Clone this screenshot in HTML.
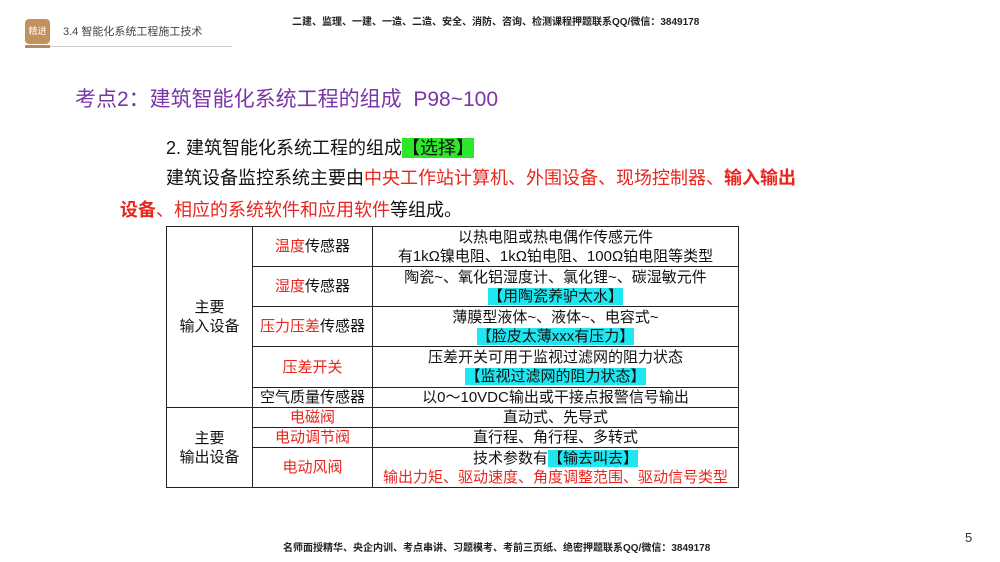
<!DOCTYPE html>
<html><head><meta charset="utf-8"><style>
body{margin:0;width:1000px;height:562px;background:#fff;position:relative;overflow:hidden;font-family:"Liberation Sans","Noto Sans CJK SC",sans-serif;color:#111}
.a{position:absolute;white-space:nowrap}
.r{color:#e8261e}
.hl{background:#1fe6f0}
.g{background:#2ee62a}
table{position:absolute;left:166px;top:226px;border-collapse:collapse;font-size:15px;line-height:19px}
td{border:1.5px solid #222;text-align:center;padding:0;vertical-align:middle;white-space:nowrap}
</style></head><body>
<div class="a" style="left:25px;top:19px;width:25px;height:25px;background:#c4915c;border-radius:4px;color:#fff;font-size:9px;line-height:25px;text-align:center">精进</div>
<div class="a" style="left:25px;top:45px;width:25px;height:3px;background:#b9875a"></div>
<div class="a" style="left:50px;top:46px;width:182px;height:1px;background:#ccc"></div>
<div class="a" style="left:63px;top:23px;font-size:11px;color:#444">3.4 智能化系统工程施工技术</div>
<div class="a" style="left:292px;top:13px;font-size:10px;color:#222;font-weight:bold">二建、监理、一建、一造、二造、安全、消防、咨询、检测课程押题联系QQ/微信：3849178</div>
<div class="a" style="left:75px;top:83px;font-size:21px;color:#7a35a8">考点2：建筑智能化系统工程的组成&nbsp; P98~100</div>
<div class="a" style="left:166px;top:134px;font-size:18px">2. 建筑智能化系统工程的组成<span class="g">【选择】</span></div>
<div class="a" style="left:166px;top:164px;font-size:18px">建筑设备监控系统主要由<span class="r">中央工作站计算机、外围设备、现场控制器、<b>输入输出</b></span></div>
<div class="a" style="left:120px;top:196px;font-size:18px"><span class="r"><b>设备</b>、相应的系统软件和应用软件</span>等组成。</div>
<table>
<colgroup><col style="width:86px"><col style="width:120px"><col style="width:366px"></colgroup>
<tr style="height:40px"><td rowspan="5">主要<br>输入设备</td><td><span class="r">温度</span>传感器</td><td>以热电阻或热电偶作传感元件<br>有1kΩ镍电阻、1kΩ铂电阻、100Ω铂电阻等类型</td></tr>
<tr style="height:40px"><td><span class="r">湿度</span>传感器</td><td>陶瓷~、氧化铝湿度计、氯化锂~、碳湿敏元件<br><span class="hl">【用陶瓷养驴太水】</span></td></tr>
<tr style="height:40px"><td><span class="r">压力压差</span>传感器</td><td>薄膜型液体~、液体~、电容式~<br><span class="hl">【脸皮太薄xxx有压力】</span></td></tr>
<tr style="height:41px"><td class="r">压差开关</td><td>压差开关可用于监视过滤网的阻力状态<br><span class="hl">【监视过滤网的阻力状态】</span></td></tr>
<tr style="height:20px"><td>空气质量传感器</td><td>以0～10VDC输出或干接点报警信号输出</td></tr>
<tr style="height:20px"><td rowspan="3">主要<br>输出设备</td><td class="r">电磁阀</td><td>直动式、先导式</td></tr>
<tr style="height:20px"><td class="r">电动调节阀</td><td>直行程、角行程、多转式</td></tr>
<tr style="height:40px"><td class="r">电动风阀</td><td>技术参数有<span class="hl">【输去叫去】</span><br><span class="r">输出力矩、驱动速度、角度调整范围、驱动信号类型</span></td></tr>
</table>
<div class="a" style="left:283px;top:539px;font-size:10px;color:#222;font-weight:bold">名师面授精华、央企内训、考点串讲、习题模考、考前三页纸、绝密押题联系QQ/微信：3849178</div>
<div class="a" style="left:965px;top:530px;font-size:13px;color:#333">5</div>
</body></html>
